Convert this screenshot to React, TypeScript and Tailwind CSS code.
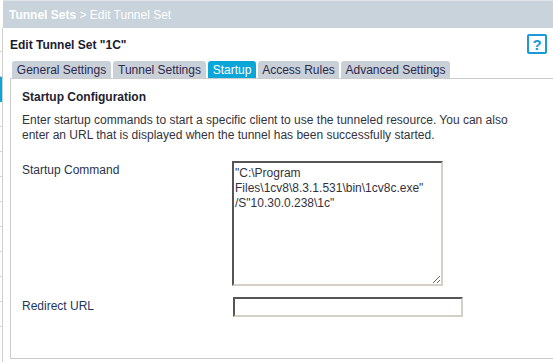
import React from "react";

const font = { fontFamily: '"Liberation Sans", Arial, sans-serif' };

function Sidebar() {
  const items = [0, 1, 2, 3, 4, 5, 6, 7, 8, 9, 10];
  return (
    <div className="flex w-[3px] shrink-0 flex-col">
      <div className="h-[28px] bg-white" />
      <div className="flex flex-1 flex-col border-r border-[#cfcfcf]">
        <div className="h-[24px] border-b border-[#d6d6d6]" />
        {items.map((i) => (
          <div
            key={i}
            className={
              i === 1
                ? "h-[25px] bg-[#0aa6d8]"
                : "h-[25px] border-b border-[#d6d6d6]"
            }
          />
        ))}
      </div>
    </div>
  );
}

const tabs = [
  { label: "General Settings", w: "w-[99px]" },
  { label: "Tunnel Settings", w: "w-[93px]" },
  { label: "Startup", w: "w-[48px]", active: true },
  { label: "Access Rules", w: "w-[81px]" },
  { label: "Advanced Settings", w: "w-[109px]" },
];

export default function App() {
  return (
    <div className="flex h-[362px] w-[553px] overflow-hidden bg-white" style={font}>
      <Sidebar />
      <div className="flex min-w-0 flex-1 flex-col">
        <div className="flex h-[28px] items-center border-t border-[#dfe4e8] bg-[#c8d3dc] pl-[6px] text-[12px] text-white">
          <span className="font-bold">Tunnel Sets</span>
          <span>&nbsp;&gt; Edit Tunnel Set</span>
        </div>
        <div className="flex h-[33px] items-center justify-between pl-[7px] pr-[6px]">
          <span className="mt-[1px] text-[12px] font-bold text-[#1b1b2e]">Edit Tunnel Set "1C"</span>
          <div className="mt-[-1px] flex h-[20px] w-[20px] items-center justify-center rounded-[2px] border-2 border-[#1a9ad8] text-[15px] font-bold leading-none text-[#1a9ad8]">
            ?
          </div>
        </div>
        <div className="flex h-[17px] gap-[2px] pl-[9px]">
          {tabs.map((t) => (
            <div
              key={t.label}
              className={
                (t.active
                  ? "bg-[#0aa6d8] text-white "
                  : "bg-[#c9d0d8] text-[#2d2a4e] ") +
                t.w +
                " flex items-center justify-center rounded-t-[3px] text-[12px] leading-none"
              }
            >
              {t.label}
            </div>
          ))}
        </div>
        <div className="ml-[7px] mr-[-10px] flex h-[281px] flex-col border border-[#cccccc] pl-[11px] pt-[9px] text-[12px] text-[#333340]">
          <div className="h-[17px] font-bold text-[#22222e]">Startup Configuration</div>
          <div className="mt-[8px] whitespace-nowrap leading-[15px]">
            Enter startup commands to start a specific client to use the tunneled resource. You can also
            <br />
            enter an URL that is displayed when the tunnel has been successfully started.
          </div>
          <div className="mt-[18px] flex">
            <div className="w-[210px] text-[#2b3350]">Startup Command</div>
            <textarea
              readOnly
              defaultValue={'"C:\\Program Files\\1cv8\\8.3.1.531\\bin\\1cv8c.exe" /S"10.30.0.238\\1c"'}
              className="h-[125px] w-[211px] resize border-2 border-b-[#d4d0c8] border-l-[#555555] border-r-[#d4d0c8] border-t-[#555555] bg-white px-[1px] pt-[3px] text-[12px] leading-[15px] text-[#333340] outline-none"
              style={font}
            />
          </div>
          <div className="mt-[11px] flex">
            <div className="w-[211px] text-[#1f3560]">Redirect URL</div>
            <div className="h-[20px] w-[230px] border-2 border-b-[#d4d0c8] border-l-[#555555] border-r-[#d4d0c8] border-t-[#555555] bg-white" />
          </div>
        </div>
      </div>
    </div>
  );
}
